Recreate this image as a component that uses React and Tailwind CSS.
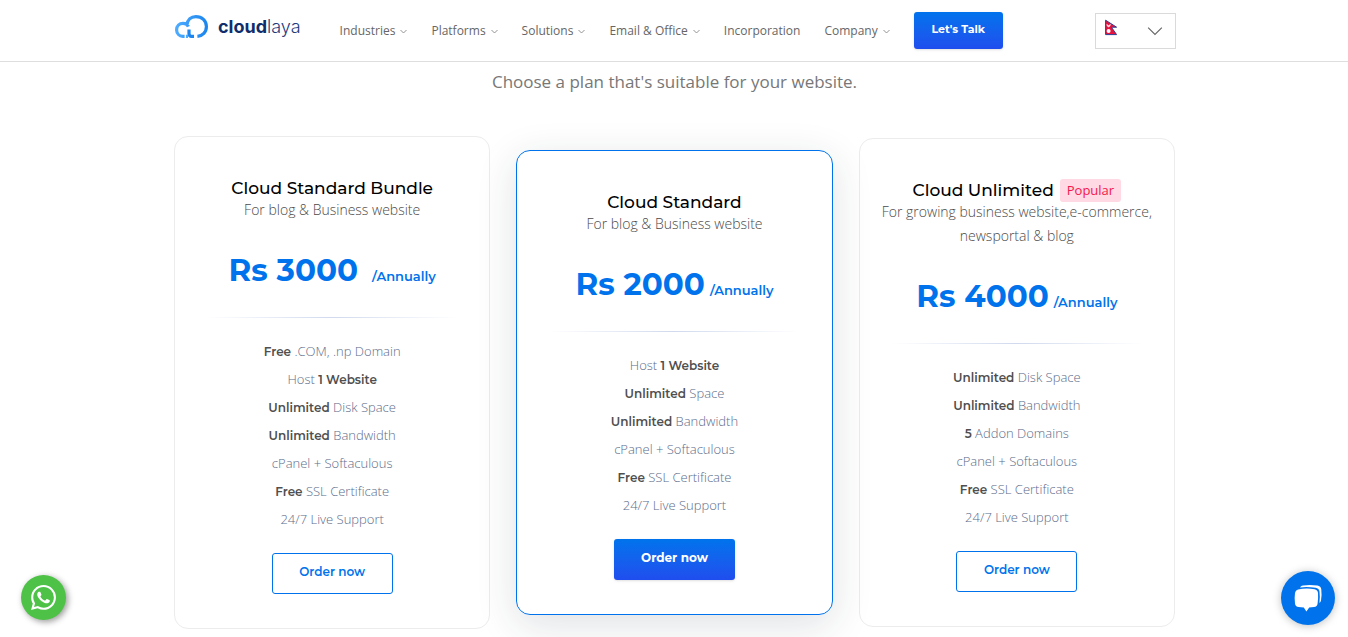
import React from "react";

const display = "font-[Montserrat,Inter,sans-serif]";

const navItems = [
  { label: "Industries", menu: true },
  { label: "Platforms", menu: true },
  { label: "Solutions", menu: true },
  { label: "Email & Office", menu: true },
  { label: "Incorporation", menu: false },
  { label: "Company", menu: true },
];

const plans = [
  {
    name: "Cloud Standard Bundle",
    tagline: "For blog & Business website",
    price: "Rs 3000",
    wide: true,
    features: [
      [["Free", 1], [" .COM, .np Domain", 0]],
      [["Host ", 0], ["1 Website", 1]],
      [["Unlimited", 1], [" Disk Space", 0]],
      [["Unlimited", 1], [" Bandwidth", 0]],
      [["cPanel + Softaculous", 0]],
      [["Free", 1], [" SSL Certificate", 0]],
      [["24/7 Live Support", 0]],
    ],
  },
  {
    name: "Cloud Standard",
    tagline: "For blog & Business website",
    price: "Rs 2000",
    featured: true,
    features: [
      [["Host ", 0], ["1 Website", 1]],
      [["Unlimited", 1], [" Space", 0]],
      [["Unlimited", 1], [" Bandwidth", 0]],
      [["cPanel + Softaculous", 0]],
      [["Free", 1], [" SSL Certificate", 0]],
      [["24/7 Live Support", 0]],
    ],
  },
  {
    name: "Cloud Unlimited",
    badge: "Popular",
    tagline: "For growing business website,e-commerce, newsportal & blog",
    price: "Rs 4000",
    features: [
      [["Unlimited", 1], [" Disk Space", 0]],
      [["Unlimited", 1], [" Bandwidth", 0]],
      [["5", 1], [" Addon Domains", 0]],
      [["cPanel + Softaculous", 0]],
      [["Free", 1], [" SSL Certificate", 0]],
      [["24/7 Live Support", 0]],
    ],
  },
];

function Logo() {
  return (
    <a href="#" className="flex shrink-0 items-center gap-[9px]" aria-label="cloudlaya home">
      <svg width="35" height="25" viewBox="0 0 35 25" fill="none" strokeWidth="3.2">
        <defs>
          <linearGradient id="cloud" x1="0" y1="0" x2="1" y2="0">
            <stop offset="0" stopColor="#4dabff" />
            <stop offset="1" stopColor="#1c86ee" />
          </linearGradient>
        </defs>
        <path
          stroke="url(#cloud)"
          d="M10.6 22.4H8.8A6.5 6.5 0 0 1 2.6 16C2.6 12 5.4 9.4 9 9.4C11.4 9.4 13.4 10.6 14.4 12.6M12.8 11.4C13.4 5.4 17.2 2.6 21.8 2.6C28 2.6 32.4 6.8 32.4 12.6C32.4 18.2 28.6 22 23.4 22.4"
        />
        <path stroke="#1c86ee" d="M15 15.4V19.6Q15 22.4 17.6 22.4H20" />
        <path stroke="#4dabff" d="M12 22.4H14" />
      </svg>
      <span className="font-[Inter,sans-serif] text-[18px] leading-6 font-light text-[#1d3b7c]">
        <b className="font-bold text-[#0f2d6b]">cloud</b>laya
      </span>
    </a>
  );
}

function Chevron({ size, stroke, className }) {
  return (
    <svg width={size} height={size} viewBox="0 0 14 14" fill="none" stroke="currentColor" className={className}>
      <path d="M1 4L7 10L13 4" strokeWidth={stroke} />
    </svg>
  );
}

function NepalFlag() {
  return (
    <svg width="14" height="17" viewBox="0 0 14 17" className="self-start">
      <path d="M1.6 1.2L12.6 8.2H7.4L12.6 15.6H1.6Z" fill="#e8123c" stroke="#2c3f94" strokeWidth="1" />
      <path d="M2.8 5.6Q4.6 7.8 6.4 5.6Q5.8 7.8 4.6 7.8T2.8 5.6Z" fill="#fff" stroke="#fff" strokeWidth=".7" />
      <circle cx="4.6" cy="12" r="2" fill="#fff" />
    </svg>
  );
}

function Header() {
  return (
    <header className="border-b border-[#dedede] bg-white">
      <div className="mx-auto flex h-[61px] max-w-[1004px] items-center pl-0.5">
        <div className="pb-2">
          <Logo />
        </div>
        <nav className="ml-[39px] flex items-center gap-6 text-[12px] font-medium whitespace-nowrap text-[#666]">
          {navItems.map((item) =>
            item.menu ? (
              <button key={item.label} type="button" className="flex items-center gap-[5px]">
                {item.label}
                <Chevron size="7" stroke="1.8" className="mt-0.5 text-[#888]" />
              </button>
            ) : (
              <a key={item.label} href="#">
                {item.label}
              </a>
            )
          )}
        </nav>
        <button
          type="button"
          className={`${display} ml-6 h-[37px] w-[89px] shrink-0 rounded-[3px] bg-linear-to-b from-[#0073ec] to-[#1f4dee] pb-0.5 text-[11px] font-bold text-white shadow-sm`}
        >
          Let's Talk
        </button>
        <div className="relative ml-auto mt-px flex h-9 w-[81px] items-center justify-between border border-[#dadada] pt-[5px] pr-3 pb-[5px] pl-2 text-[#666]">
          <NepalFlag />
          <Chevron size="16" stroke="1" />
          <select aria-label="Country" className="absolute inset-0 h-full w-full cursor-pointer opacity-0">
            <option>Nepal</option>
          </select>
        </div>
      </div>
    </header>
  );
}

function PlanCard({ plan }) {
  const frame = plan.featured
    ? "border-[#0073ec] shadow-[0_10px_40px_rgba(30,45,60,0.14)] z-10"
    : "border-[#ececec]";
  const button = plan.featured
    ? "bg-linear-to-b from-[#0073ec] to-[#1f4dee] text-white font-bold shadow-sm"
    : "border border-[#0073ec] text-[#0073ec] font-semibold";
  return (
    <article className={`flex flex-col items-center rounded-[14px] border px-5 pt-[42px] pb-[34px] text-center ${frame}`}>
      <h3 className={`${display} flex h-[19px] items-center gap-[6px] text-[17px] font-medium whitespace-nowrap text-black`}>
        {plan.name}
        {plan.badge && (
          <span className="rounded-[3px] bg-[#ffd9e3] px-[7px] font-['Open_Sans',sans-serif] text-[13px] leading-[23px] font-normal text-[#f5164e]">
            {plan.badge}
          </span>
        )}
      </h3>
      <p className="text-[14px] leading-6 font-light text-[#4a4a4a]">{plan.tagline}</p>
      <p className={`${display} mt-6 flex h-12 items-baseline ${plan.wide ? "gap-[14px]" : "gap-[5px]"} font-bold text-[#0073ec]`}>
        <span className="text-[31px] leading-[48px]">{plan.price}</span>
        <span className="text-[13px] font-semibold">/Annually</span>
      </p>
      <div className="mt-[23px] h-px w-[250px] bg-linear-to-r from-transparent via-[#d0d9ee] to-transparent" />
      <ul className="mt-[19px] text-[13px] leading-7 font-light text-[#5c6c8a]">
        {plan.features.map((parts, i) => (
          <li key={i} className="h-7">
            {parts.map(([text, strong], j) =>
              strong ? (
                <strong key={j} className={`${display} text-[12px] leading-none font-semibold text-[#4f4f4f]`}>
                  {text}
                </strong>
              ) : (
                <span key={j}>{text}</span>
              )
            )}
          </li>
        ))}
      </ul>
      <button type="button" className={`${display} mt-5 h-[41px] w-[121px] rounded-[3px] pb-1 text-[12px] ${button}`}>
        Order now
      </button>
    </article>
  );
}

export default function App() {
  return (
    <div className="bg-white font-['Open_Sans',sans-serif]">
      <Header />
      <main className="mx-auto max-w-[1002px] pl-px">
        <p className="pt-2 text-center text-[17px] leading-6 text-[#777]">
          Choose a plan that's suitable for your website.
        </p>
        <section className="mt-[42px] grid grid-cols-3 items-center gap-[26px] pb-2">
          {plans.map((plan) => (
            <PlanCard key={plan.name} plan={plan} />
          ))}
        </section>
      </main>

      <a
        href="#"
        aria-label="WhatsApp"
        className="fixed bottom-[17px] left-[21px] flex size-[45px] items-center justify-center rounded-full bg-[#4dc247] shadow-[2px_2px_6px_rgba(0,0,0,0.4)]"
      >
        <svg width="25" height="25" viewBox="0 0 24 24" fill="#fff">
          <path d="M17.472 14.382c-.297-.149-1.758-.867-2.03-.967-.273-.099-.471-.148-.67.15-.197.297-.767.966-.94 1.164-.173.199-.347.223-.644.075-.297-.15-1.255-.463-2.39-1.475-.883-.788-1.48-1.761-1.653-2.059-.173-.297-.018-.458.13-.606.134-.133.298-.347.446-.52.149-.174.198-.298.298-.497.099-.198.05-.371-.025-.52-.075-.149-.669-1.612-.916-2.207-.242-.579-.487-.5-.669-.51-.173-.008-.371-.01-.57-.01-.198 0-.52.074-.792.372-.272.297-1.04 1.016-1.04 2.479 0 1.462 1.065 2.875 1.213 3.074.149.198 2.096 3.2 5.077 4.487.709.306 1.262.489 1.694.625.712.227 1.36.195 1.871.118.571-.085 1.758-.719 2.006-1.413.248-.694.248-1.289.173-1.413-.074-.124-.272-.198-.57-.347m-5.421 7.403h-.004a9.87 9.87 0 01-5.031-1.378l-.361-.214-3.741.982.998-3.648-.235-.374a9.86 9.86 0 01-1.51-5.26c.001-5.45 4.436-9.884 9.888-9.884 2.64 0 5.122 1.03 6.988 2.898a9.825 9.825 0 012.893 6.994c-.003 5.45-4.437 9.884-9.885 9.884m8.413-18.297A11.815 11.815 0 0012.05 0C5.495 0 .16 5.335.157 11.892c0 2.096.547 4.142 1.588 5.945L.057 24l6.305-1.654a11.882 11.882 0 005.683 1.448h.005c6.554 0 11.89-5.335 11.893-11.893a11.821 11.821 0 00-3.48-8.413z" />
        </svg>
      </a>
      <button
        type="button"
        aria-label="Open chat"
        className="fixed right-[13px] bottom-3 flex size-[54px] items-center justify-center rounded-full bg-[#0073ec] shadow-[0_1px_8px_rgba(0,0,0,0.25)]"
      >
        <svg width="28" height="28" viewBox="0 0 28 28" fill="#fff">
          <path d="M4 5.5Q12 3.8 20.5 5.2Q23.6 5.8 24 9Q24.4 14 23.6 19.4Q23.2 22.6 20 23.1L15.2 23.6L12.4 27.6L9.8 23.6L4.6 23.1Q1.4 22.6 1 19.4Q.3 14 1 9Q1.4 6 4 5.5Z" />
          <path d="M6 3.4Q7 1.8 9 1.5Q16 .6 23.4 1.6Q26.8 2.2 27.3 5.4Q28 11 27 16.6Q26.6 18.4 25.4 19Q26.2 13 25.5 7.6Q25 4.4 21.6 3.8Q14 2.6 6 3.4Z" />
        </svg>
      </button>
    </div>
  );
}
